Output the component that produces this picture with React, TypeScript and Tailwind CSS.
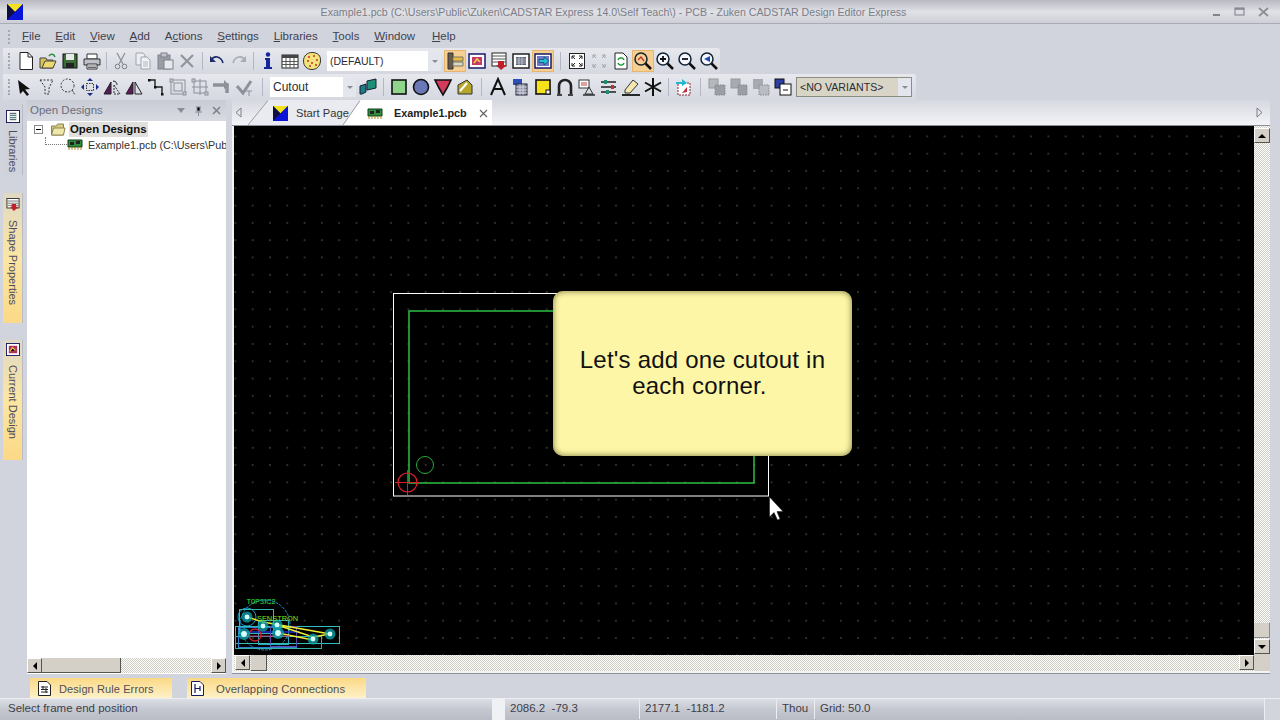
import React from "react";

type P = { children?: React.ReactNode };
const S = ({ children }: P) => (
  <span className="flex w-[22px] h-[22px] shrink-0 items-center justify-center">
    <svg width="20" height="20" viewBox="0 0 20 20" fill="none">{children}</svg>
  </span>
);
const Sel = ({ children }: P) => (
  <span className="flex w-[22px] h-[22px] shrink-0 items-center justify-center bg-[#f6cf93] border border-[#e6b56f]">
    <svg width="20" height="20" viewBox="0 0 20 20" fill="none">{children}</svg>
  </span>
);
const Sep = ({ w }: { w: number }) => (
  <span style={{ width: w }} className="flex shrink-0 justify-center">
    <span className="w-px h-[18px] bg-[#b4b7c2]" />
  </span>
);
const Grip = () => <span className="w-[2px] h-[16px] ml-[5px] shrink-0 border-l-2 border-dotted border-[#a4a7b2]" />;

const Logo = ({ s = 16 }: { s?: number }) => (
  <svg width={s} height={s} viewBox="0 0 16 16"><rect width="16" height="16" fill="#0a0a9c" /><path d="M0 0H16L8 8Z" fill="#f3e21c" /><path d="M0 0L8 8L0 16Z" fill="#101040" /><path d="M0 16L16 0V16Z" fill="#0a14d8" /></svg>
);
const Board = ({ w = 16 }: { w?: number }) => (
  <svg width={w} height={12} viewBox="0 0 16 12"><path d="M1 1H15V8H1Z" fill="#2f8f3c" stroke="#0d3d18" /><path d="M3 3H7V6H3ZM9 2H13V5H9Z" fill="#222" /><path d="M2 8V11M5 8V11M8 8V11M11 8V11M14 8V11" stroke="#b58a20" /></svg>
);
const Mag = ({ children, hot }: P & { hot?: boolean }) => (
  <>
    <circle cx="8" cy="8" r="6" fill={hot ? "#f6cf93" : "#f4f6ff"} stroke="#123" strokeWidth="1.5" />
    <path d="M12.5 12.5L18 18" stroke="#111" strokeWidth="2.5" />
    {children}
  </>
);
const Panel = ({ tone = "#181868", children }: P & { tone?: string }) => (
  <>
    <rect x="2" y="3" width="16" height="14" fill="#fff" stroke={tone} strokeWidth="1.5" />
    {children}
  </>
);

const ChevCombo = ({ label, w, bg = "bg-white", border = "", text = "text-[12px]", pad = "pt-px" }: { label: string; w: string; bg?: string; border?: string; text?: string; pad?: string }) => (
  <div className={`${w} ${bg} ${border} ${text} h-[20px] shrink-0 flex items-center justify-between text-[#2b2b33]`}>
    <span className={`pl-[3px] ${pad}`}>{label}</span>
    <span className="w-[13px] h-full flex items-center justify-center bg-[#e4e6ee]">
      <span className="border-x-[3px] border-t-[3px] border-x-transparent border-t-[#8a8c96]" />
    </span>
  </div>
);

const ScrollBtn = ({ d, cls = "" }: { d: "l" | "r" | "u" | "d"; cls?: string }) => (
  <span className={`w-[15px] h-[15px] shrink-0 flex items-center justify-center bg-[#d4d0c8] border-r border-b border-[#55554f] border-t border-l border-t-white border-l-white ${cls}`}>
    {d === "l" && <span className="border-y-[4px] border-r-[4px] border-y-transparent border-r-black" />}
    {d === "r" && <span className="border-y-[4px] border-l-[4px] border-y-transparent border-l-black" />}
    {d === "u" && <span className="border-x-[4px] border-b-[4px] border-x-transparent border-b-black" />}
    {d === "d" && <span className="border-x-[4px] border-t-[4px] border-x-transparent border-t-black" />}
  </span>
);

const Dither = "bg-[repeating-conic-gradient(#cfccc2_0_25%,#ffffff_0_50%)] bg-[size:2px_2px]";

const SideTab = ({ label, icon, yellow, h, pt, gap }: { label: string; icon: React.ReactNode; yellow?: boolean; h: string; pt: string; gap: string }) => (
  <div className={`${h} ${pt} ${gap} w-[20px] flex flex-col items-center pl-px ${yellow ? "bg-gradient-to-b from-[#dfd9c4] via-[#fbe6a3] to-[#fbd987]" : "bg-[#d0d2dc]"} border-r border-[#b9bbc6]`}>
    <span className="shrink-0 flex">{icon}</span>
    <span className="[writing-mode:vertical-rl] text-[11px] text-[#4c4c5c] leading-[16px] whitespace-nowrap">{label}</span>
  </div>
);

const Menu = ({ a, u, z, cls = "" }: { a?: string; u: string; z: string; cls?: string }) => (
  <span className={`text-[11.5px] text-[#3f414d] whitespace-nowrap ${cls}`}>
    {a}<span className="underline">{u}</span>{z}
  </span>
);

const Pad = ({ x, y, r = 3 }: { x: number; y: number; r?: number }) => (
  <>
    <circle cx={x} cy={y} r={r + 2.5} fill="#0fa8b0" opacity=".75" />
    <circle cx={x} cy={y} r={r - 0.6} fill="#d8ffff" />
  </>
);

export default function App() {
  return (
    <div className="w-[1280px] h-[720px] flex flex-col overflow-hidden bg-[#d1d4dd] font-['Liberation_Sans','Noto_Sans',sans-serif] select-none">
      {/* Title bar */}
      <div className="h-[24px] shrink-0 relative flex items-center bg-gradient-to-b from-[#b9bac2] via-[#e0e1e6] to-[#cfd0d7] border-b border-[#a9abb5] pl-[7px]">
        <Logo />
        <div className="flex-1 text-center pt-[2px] text-[10.6px] text-[#7b7d88] whitespace-nowrap">
          Example1.pcb (C:\Users\Public\Zuken\CADSTAR Express 14.0\Self Teach\) - PCB - Zuken CADSTAR Design Editor Express
        </div>
        <div className="flex items-center gap-[13px] pr-[11px] pl-[8px]">
          <svg width="9" height="9" viewBox="0 0 9 9"><path d="M1 8H8" stroke="#6b6d78" strokeWidth="1.6" /></svg>
          <svg width="11" height="9" viewBox="0 0 11 9"><rect x="1" y="1" width="9" height="7" fill="none" stroke="#7b7d88" /><path d="M1 2H10" stroke="#7b7d88" strokeWidth="1.4" /></svg>
          <svg width="11" height="10" viewBox="0 0 11 10"><path d="M1 1L10 9M10 1L1 9" stroke="#8b8d97" strokeWidth="1.7" /></svg>
        </div>
      </div>

      {/* Menu */}
      <div className="h-[24px] shrink-0 flex items-center pl-[8px] pt-[2px]">
        <span className="w-[2px] h-[14px] border-l-2 border-dotted border-[#a4a7b2] mr-[12px]" />
        <div className="flex items-center gap-[14.8px]">
          <Menu u="F" z="ile" />
          <Menu u="E" z="dit" />
          <Menu u="V" z="iew" />
          <Menu u="A" z="dd" />
          <Menu a="A" u="c" z="tions" />
          <Menu u="S" z="ettings" />
          <Menu u="L" z="ibraries" />
          <Menu u="T" z="ools" />
          <Menu u="W" z="indow" />
          <Menu u="H" z="elp" cls="ml-[2px]" />
        </div>
      </div>

      {/* Toolbar 1 */}
      <div className="h-[26px] w-[717px] shrink-0 flex items-center ml-[3px] bg-gradient-to-b from-[#e6e8ee] to-[#d5d8e0] rounded-r-[3px]">
        <Grip />
        <span className="w-[5px]" />
        <S><path d="M4 1.5H12L16.5 6V18.5H4Z" fill="#fff" stroke="#222" /><path d="M12 1.5V6H16.5" stroke="#222" /></S>
        <S><path d="M2 7H8L9 9H15V17H2Z" fill="#d8c25a" stroke="#444" /><path d="M4 17L7 10H18L15 17Z" fill="#ecd972" stroke="#444" /><path d="M11 5C13 2 16 3 17 6" stroke="#2f8f3c" strokeWidth="1.5" /></S>
        <S><rect x="3" y="3" width="14" height="14" fill="#3d6b35" stroke="#111" /><rect x="6" y="3" width="8" height="6" fill="#e8e8e8" /><rect x="6" y="12" width="8" height="5" fill="#222" /></S>
        <S><path d="M5 3H15V8H5Z" fill="#fff" stroke="#333" /><path d="M2 8H18V14H2Z" fill="#bfc2c8" stroke="#333" /><path d="M5 13H15V18H5Z" fill="#fff" stroke="#333" /><path d="M6 15H14M6 16.5H14" stroke="#666" /></S>
        <Sep w={7} />
        <S><path d="M6 2L12 13M14 2L8 13" stroke="#8e909a" strokeWidth="1.3" /><circle cx="6.5" cy="15.5" r="2.3" stroke="#7e808a" /><circle cx="13.5" cy="15.5" r="2.3" stroke="#7e808a" /></S>
        <S><path d="M3 2H10L12 4V14H3Z" fill="#eceef2" stroke="#a1a3ad" /><path d="M8 6H14L17 9V18H8Z" fill="#f2f3f6" stroke="#a1a3ad" /><path d="M10 11H15M10 13H15M10 15H15" stroke="#b4b6be" /></S>
        <S><rect x="3" y="4" width="12" height="14" fill="#9a9ca6" stroke="#7f818b" /><rect x="6" y="2" width="6" height="4" fill="#c1c3cb" stroke="#7f818b" /><rect x="9" y="9" width="9" height="9" fill="#e8e9ed" stroke="#7f818b" /></S>
        <S><path d="M4 4L16 16M16 4L4 16" stroke="#92949e" strokeWidth="2.2" /></S>
        <Sep w={8} />
        <S><path d="M4 9C7 4 14 5 16 12" stroke="#1d2b66" strokeWidth="1.6" /><path d="M3 5V11H9Z" fill="#1d2b66" /></S>
        <S><path d="M16 9C13 4 6 5 4 12" stroke="#a9abb5" strokeWidth="1.6" /><path d="M17 5V11H11Z" fill="#a9abb5" /></S>
        <Sep w={7} />
        <S><circle cx="10" cy="3.5" r="2.2" fill="#14249a" /><path d="M7 7H12V16H14V18H6V16H8V9H7Z" fill="#14249a" /></S>
        <S><rect x="2" y="4" width="16" height="13" fill="#fff" stroke="#222" /><rect x="2" y="4" width="16" height="3" fill="#444" /><path d="M2 10.5H18M2 13.5H18M6 7V17M10 7V17M14 7V17" stroke="#555" /></S>
        <S><path d="M10 1.5C16 1.5 19 5 18.5 10C18 16 14 18.5 10 18.5C5 18.5 1.5 15 1.5 10C1.5 5 5 1.5 10 1.5Z" fill="#f4e37a" stroke="#333" /><path d="M6 6H8M11 5H13M14 9H16M5 10H7M9 12H11M13 14H15M7 15H9" stroke="#c0303a" strokeWidth="1.4" /></S>
        <span className="w-[4px]" />
        <ChevCombo label="(DEFAULT)" w="w-[114px]" text="text-[10.5px]" />
        <span className="w-[3px]" />
        <Sel><path d="M3 2H8V18H3Z" fill="#6a5a4a" stroke="#333" /><path d="M8 6H18V10H8Z" fill="#e8c040" stroke="#776" /><path d="M8 11H18V15H8Z" fill="#d8d8c0" stroke="#776" /></Sel>
        <S><Panel><path d="M5 6H15V14H5Z" fill="#c63a6a" /><path d="M7 12L10 8L13 11" stroke="#f4d34a" strokeWidth="1.5" /></Panel></S>
        <S><rect x="3" y="2" width="14" height="13" fill="#fff" stroke="#222" /><path d="M3 5H17M3 8H17M3 11H17" stroke="#555" /><path d="M9 10H15V14H18L12 19L7 14H9Z" fill="#c0202a" /></S>
        <S><Panel tone="#222"><rect x="5" y="6" width="10" height="8" fill="#5a6078" /><path d="M5 8H15M5 10H15M5 12H15M8 6V14M11 6V14" stroke="#eee" strokeWidth=".6" /></Panel></S>
        <Sel><Panel><rect x="4" y="5" width="12" height="10" fill="#6a78c8" /><path d="M6 8.5H11V6L16 10L11 14V11.5H6Z" fill="#22c0d8" stroke="#134" strokeWidth=".6" /></Panel></Sel>
        <Sep w={12} />
        <S><rect x="2.5" y="2.5" width="15" height="15" fill="#fff" stroke="#222" /><path d="M5 5H8M5 5V8M5 5L8 8M15 5H12M15 5V8M15 5L12 8M5 15H8M5 15V12M5 15L8 12M15 15H12M15 15V12M15 15L12 12" stroke="#222" /></S>
        <S><path d="M4 4H7M4 4V7M4 4L7 7M16 4H13M16 4V7M16 4L13 7M4 16H7M4 16V13M4 16L7 13M16 16H13M16 16V13M16 16L13 13" stroke="#9fa1ab" /></S>
        <S><path d="M4 2H12L16 6V18H4Z" fill="#fff" stroke="#222" /><path d="M7 9C8 6 12 6 13 9M13 12C12 15 8 15 7 12" stroke="#1f9a3a" strokeWidth="1.5" /></S>
        <Sel><Mag hot><path d="M5 9L8 6L11 10" stroke="#c03030" strokeWidth="1.3" /></Mag></Sel>
        <S><Mag><path d="M5 8H11M8 5V11" stroke="#111" strokeWidth="1.8" /></Mag></S>
        <S><Mag><path d="M5 8H11" stroke="#111" strokeWidth="1.8" /></Mag></S>
        <S><Mag><path d="M11 5L5 8L11 11Z" fill="#1c4ea8" /></Mag></S>
      </div>

      {/* Toolbar 2 */}
      <div className="h-[26px] w-[913px] shrink-0 flex items-center ml-[3px] bg-gradient-to-b from-[#e6e8ee] to-[#d5d8e0] rounded-r-[3px]">
        <Grip />
        <span className="w-[3px]" />
        <S><path d="M4 3L16 12L11 12.5L15 17.5L13 19L9 14L6 17Z" fill="#111" /></S>
        <S><path d="M4 3H17L13 11V17H9V10Z" stroke="#333" strokeDasharray="2 1.5" /></S>
        <S><circle cx="9.5" cy="8.5" r="6.5" stroke="#333" strokeDasharray="2 1.5" /><path d="M14 13L17 18" stroke="#333" strokeDasharray="2 1" /></S>
        <S><path d="M10 1L13 4H7ZM10 19L13 16H7ZM1 10L4 7V13ZM19 10L16 7V13Z" fill="#1b2b88" /><rect x="6.5" y="6.5" width="7" height="7" stroke="#333" strokeDasharray="1.5 1" /></S>
        <S><path d="M2 17L9 5V17Z" fill="#5a1a58" stroke="#222" /><path d="M12 8V17H18Z" stroke="#333" strokeDasharray="2 1" /><path d="M11 4C14 4 15 6 15 8" stroke="#222" /></S>
        <S><path d="M2 17L9 5V17Z" fill="#5a1a58" stroke="#222" /><path d="M11 5V17H18Z" stroke="#222" /></S>
        <S><path d="M3 3L9 3V10H16V17" stroke="#222" strokeWidth="1.4" /><rect x="2" y="2" width="2.5" height="2.5" fill="#111" /><rect x="8" y="9" width="2.5" height="2.5" fill="#111" /><rect x="15" y="16" width="2.5" height="2.5" fill="#111" /></S>
        <S><rect x="3" y="3" width="14" height="14" stroke="#8e909a" /><rect x="6" y="6" width="8" height="8" stroke="#8e909a" /><rect x="2" y="2" width="3" height="3" fill="#c9cbd3" stroke="#8e909a" /><rect x="15" y="15" width="3" height="3" fill="#c9cbd3" stroke="#8e909a" /></S>
        <S><rect x="4" y="4" width="12" height="12" stroke="#8e909a" /><path d="M10 2V18M2 10H18" stroke="#8e909a" /><rect x="2" y="2" width="3" height="3" fill="#c9cbd3" stroke="#8e909a" /><rect x="15" y="15" width="3" height="3" fill="#c9cbd3" stroke="#8e909a" /></S>
        <S><path d="M1 8H15V16" stroke="#8e909a" strokeWidth="3.5" /><path d="M12 3L17 8L12 12" fill="#8e909a" /></S>
        <S><path d="M3 9L9 16L17 4" stroke="#8e909a" strokeWidth="3" /><path d="M12 14H18M15 14V19" stroke="#8e909a" /></S>
        <Sep w={15} />
        <ChevCombo label="Cutout" w="w-[86px]" pad="pt-0" />
        <span className="w-px" />
        <S><path d="M2 9L8 7V15L4 17H2Z" fill="#1d7a86" stroke="#123" /><path d="M9 4L18 2V11L9 13Z" fill="#1d8f78" stroke="#123" /></S>
        <Sep w={9} />
        <S><rect x="3" y="3" width="14" height="14" fill="#8fd48a" stroke="#111" strokeWidth="1.6" /></S>
        <S><circle cx="10" cy="10" r="7.5" fill="#6a78b8" stroke="#111" strokeWidth="1.6" /></S>
        <S><path d="M2 3H18L14 11L10 18L6 11Z" fill="#d43a5a" stroke="#111" strokeWidth="1.6" /></S>
        <S><path d="M3 17V8L12 3L17 8V17Z" fill="#b7a62c" stroke="#333" /><path d="M5 14L12 6" stroke="#fff" strokeWidth="2" /></S>
        <Sep w={11} />
        <S><path d="M3 18L10 2L17 18M6 12H14" stroke="#111" strokeWidth="2" /></S>
        <S><rect x="3" y="2" width="9" height="6" fill="#2a4fb8" /><rect x="6" y="7" width="11" height="11" fill="#8a90a8" stroke="#223" /><path d="M6 10H17M6 13H17M6 16H17M10 7V18M13 7V18" stroke="#eee" strokeWidth=".7" /></S>
        <span className="w-px" />
        <S><rect x="3" y="3" width="14" height="14" fill="#f6e21c" stroke="#111" strokeWidth="1.6" /><rect x="13" y="13" width="4" height="4" fill="#fff" stroke="#111" /></S>
        <S><path d="M4 18V9C4 1 16 1 16 9V18" stroke="#222" strokeWidth="2.6" /><path d="M2 18H7M13 18H18" stroke="#444" strokeWidth="2" /></S>
        <S><rect x="2" y="3" width="10" height="8" fill="#fff" stroke="#333" /><path d="M4 6H10M4 8H10" stroke="#c04040" /><path d="M12 10L16 17H8Z" stroke="#333" /><path d="M6 18H18" stroke="#222" strokeWidth="1.4" /></S>
        <S><path d="M2 5H17M2 10H17M2 15H17" stroke="#222" strokeWidth="1.6" /><rect x="5" y="3" width="3" height="4" fill="#1f8f70" /><rect x="12" y="8" width="3" height="4" fill="#c03030" /><rect x="7" y="13" width="3" height="4" fill="#1f8f70" /></S>
        <S><path d="M4 13L12 3L17 7L9 16H4Z" fill="#f4e8b0" stroke="#333" /><path d="M1 18H19" stroke="#111" strokeWidth="1.8" /></S>
        <S><path d="M10 1V19M2 5.5L18 14.5M18 5.5L2 14.5" stroke="#111" strokeWidth="2" /></S>
        <Sep w={8} />
        <S><rect x="5" y="6" width="12" height="12" fill="#fff" stroke="#8a2030" strokeDasharray="2 1" /><path d="M3 5H9V2L14 6L9 9V7H3Z" fill="#22b8d0" /><path d="M9 16L14 10V15Z" fill="#c03040" /></S>
        <Sep w={12} />
        <S><rect x="2" y="2" width="9" height="9" fill="#b6b8c0" stroke="#999" /><rect x="8" y="8" width="10" height="10" fill="#9c9ea6" stroke="#888" strokeDasharray="1.5 1" /></S>
        <S><rect x="2" y="2" width="9" height="9" fill="#a8aab2" stroke="#999" /><rect x="9" y="8" width="9" height="10" fill="#9c9ea6" stroke="#888" strokeDasharray="1.5 1" /></S>
        <S><path d="M2 2H12V12H2Z" fill="#a8aab2" /><path d="M8 8H18V18H8Z" fill="#babcc4" stroke="#888" strokeDasharray="1.5 1" /></S>
        <S><rect x="2" y="2" width="9" height="9" fill="#2a3fa0" stroke="#111" /><rect x="7" y="7" width="11" height="11" fill="#fff" stroke="#111" /><path d="M10 13H15" stroke="#111" /></S>
        <span className="w-[2px]" />
        <ChevCombo label="<NO VARIANTS>" w="w-[116px]" bg="bg-[#d8d5c6]" border="border border-[#8c8c80]" text="text-[10.6px]" />
      </div>

      {/* Body */}
      <div className="flex-1 min-h-0 flex">
        {/* Side tabs */}
        <div className="w-[27px] shrink-0 flex flex-col pl-[3px] pt-[4px]">
          <SideTab h="h-[71px]" pt="pt-[6px]" gap="gap-[7px]" label="Libraries" icon={<svg width="14" height="13" viewBox="0 0 15 14"><rect x=".5" y=".5" width="14" height="13" fill="#fff" stroke="#141450" /><rect x="4" y="3" width="7" height="8" fill="#5d6b78" /><path d="M4 5H11M4 7H11M4 9H11" stroke="#dfe" /></svg>} />
          <div className="mt-[18px]">
            <SideTab h="h-[130px]" pt="pt-[5px]" gap="gap-[9px]" yellow label="Shape Properties" icon={<svg width="14" height="13" viewBox="0 0 15 15"><rect x=".5" y=".5" width="14" height="11" fill="#fff" stroke="#222" /><path d="M1 3.5H14M1 6H14M1 8.5H14" stroke="#666" /><path d="M6 7H11V10H14L8.5 15L4 10H6Z" fill="#c0202a" /></svg>} />
          </div>
          <div className="mt-[17px]">
            <SideTab h="h-[120px]" pt="pt-[3px]" gap="gap-[9px]" yellow label="Current Design" icon={<svg width="14" height="13" viewBox="0 0 15 14"><rect x=".5" y=".5" width="14" height="13" fill="#fff" stroke="#181868" /><rect x="3" y="3" width="9" height="8" fill="#b03060" /><path d="M4 9L7 5L10 8" stroke="#f4d34a" strokeWidth="1.3" /></svg>} />
          </div>
        </div>

        {/* Left panel + bottom tabs column */}
        <div className="flex-1 min-w-0 flex flex-col">
          <div className="flex-1 min-h-0 flex">
            {/* Open Designs */}
            <div className="w-[199px] shrink-0 flex flex-col">
              <div className="h-[21px] shrink-0 flex items-center justify-between bg-gradient-to-b from-[#c8cbd4] to-[#d9dbe3] pl-[3px] pr-[5px]">
                <span className="text-[11.5px] text-[#6b6e7c]">Open Designs</span>
                <div className="flex items-center gap-[9px]">
                  <span className="border-x-[4px] border-t-[5px] border-x-transparent border-t-[#8a8d99]" />
                  <svg width="9" height="10" viewBox="0 0 9 10"><path d="M2 1H7M3 1V5H6V1M1 6H8M4.5 6V10" stroke="#8a8d99" /></svg>
                  <svg width="9" height="9" viewBox="0 0 9 9"><path d="M1 1L8 8M8 1L1 8" stroke="#7e818d" strokeWidth="1.5" /></svg>
                </div>
              </div>
              <div className="flex-1 min-h-0 flex flex-col bg-white">
                <div className="flex-1 min-h-0 pl-[7px] pt-[1px] overflow-hidden">
                  <div className="flex items-center h-[15px]">
                    <span className="w-[9px] h-[9px] border border-[#8a8a8a] flex items-center justify-center shrink-0"><span className="w-[5px] h-px bg-black" /></span>
                    <svg className="ml-[7px] shrink-0" width="16" height="13" viewBox="0 0 15 13"><path d="M1 3H6L7 1H13V12H1Z" fill="#d8cc82" stroke="#8a8450" /><path d="M1 12L3 5H14.5L13 12Z" fill="#f0e8aa" stroke="#8a8450" /></svg>
                    <span className="ml-[3px] pl-px pr-px bg-[#e0dfdc] text-[11.4px] font-bold text-[#111] leading-[15px] whitespace-nowrap">Open Designs</span>
                  </div>
                  <div className="flex items-center h-[16px] whitespace-nowrap">
                    <span className="ml-[11px] w-[22px] h-[8px] -mt-[8px] border-l border-b border-dotted border-[#777] shrink-0" />
                    <span className="shrink-0 flex"><Board /></span>
                    <span className="ml-[5px] text-[10.8px] text-[#333]">Example1.pcb (C:\Users\Pub</span>
                  </div>
                </div>
                <div className={`h-[15px] mb-px shrink-0 flex ${Dither}`}>
                  <ScrollBtn d="l" />
                  <span className="w-[79px] bg-[#d4d0c8] border-r border-b border-[#55554f]" />
                  <span className="flex-1" />
                  <ScrollBtn d="r" />
                </div>
              </div>
            </div>

            {/* Main document */}
            <div className="flex-1 min-w-0 flex flex-col ml-[6px] mr-[10px] border-b border-[#8f919b]">
              <div className="h-[26px] shrink-0 relative flex items-end bg-gradient-to-b from-[#d6d8e0] to-[#f3f4f7] border-b border-[#8c8e98]">
                <svg className="absolute left-[3px] top-[7px]" width="7" height="11" viewBox="0 0 7 11"><path d="M6 1L1 5.5L6 10Z" fill="none" stroke="#7c7e8a" /></svg>
                <div className="ml-[16px] h-[25px] w-[114px] shrink-0 flex items-center pl-[25px] pt-[2px] [clip-path:polygon(20px_0,100%_0,95px_100%,0_100%)] bg-[#e9ebf0] gap-[8px]">
                  <Logo s={15} />
                  <span className="text-[11.2px] text-[#333] whitespace-nowrap">Start Page</span>
                </div>
                <div className="-ml-[19px] h-[25px] w-[149px] shrink-0 flex items-center pl-[24px] pt-[2px] [clip-path:polygon(18px_0,100%_0,100%_100%,0_100%)] bg-white">
                  <Board />
                  <span className="ml-[11px] text-[10.8px] font-bold text-[#222] whitespace-nowrap">Example1.pcb</span>
                  <svg className="ml-[12px]" width="9" height="9" viewBox="0 0 9 9"><path d="M1 1L8 8M8 1L1 8" stroke="#666" strokeWidth="1.2" /></svg>
                </div>
                <svg className="absolute left-[16px] top-0" width="112" height="25" viewBox="0 0 112 25" fill="none">
                  <path d="M0 25L20 0.5M95 25L112 0.5" stroke="#9a9ca8" />
                </svg>
                <svg className="absolute right-[7px] top-[7px]" width="7" height="11" viewBox="0 0 7 11"><path d="M1 1L6 5.5L1 10Z" fill="none" stroke="#7c7e8a" /></svg>
              </div>
              <div className="flex-1 min-h-0 flex pl-[2px] pb-[2px] bg-[#f4f4f4]">
                <div className="flex-1 min-w-0 flex flex-col">
                  {/* Canvas */}
                  <div className="flex-1 min-h-0 relative overflow-hidden bg-black bg-[radial-gradient(circle,#3a3a3a_0.6px,transparent_1px)] bg-[size:17.3px_17.3px] bg-[position:-7.25px_1.75px]">
                    <svg className="absolute left-0 top-0" width="1020" height="529" viewBox="0 0 1020 529" fill="none">
                      <rect x="159.5" y="167.5" width="375" height="202.5" stroke="#fff" />
                      <rect x="175" y="185" width="345" height="172" stroke="#2cc044" strokeWidth="1.5" />
                      <circle cx="191" cy="339" r="8.5" stroke="#2aa83c" />
                      <g stroke="#d8202c">
                        <circle cx="173.5" cy="356.5" r="9.5" strokeWidth="1.2" />
                        <path d="M161 356.5H186M173.5 344V369" />
                      </g>
                      <path d="M535.5 371V391L540 386.5L543.5 394L546 393L543 385.5H549Z" fill="#fff" stroke="#111" strokeWidth=".5" />
                      {/* mini-design */}
                      <g transform="translate(-234,-126)">
                        <circle cx="265" cy="625" r="25" stroke="#1a8fd0" strokeDasharray="3 1" />
                        <circle cx="247" cy="617" r="9" stroke="#1aa0c0" />
                        <rect x="239.5" y="609.5" width="34" height="24" stroke="#30b8b0" />
                        <rect x="235.5" y="626.5" width="104" height="17" stroke="#30c0b8" />
                        <rect x="235.5" y="636.5" width="86" height="12" stroke="#30b0a8" />
                        <rect x="238.5" y="627.5" width="58" height="20" stroke="#2f7fd0" />
                        <rect x="270.5" y="626.5" width="26" height="20" stroke="#5a4ab0" />
                        <rect x="258.5" y="620.5" width="30" height="24" stroke="#30a8c0" />
                        <path d="M244 632H300" stroke="#2030d0" strokeWidth="1.4" />
                        <path d="M247 617L263 622L330 634M277 625L313 637L330 634M278 633L313 640" stroke="#f0f030" strokeWidth="1.4" />
                        <path d="M246 636H290" stroke="#c82a6a" />
                        <circle cx="255" cy="635" r="6" stroke="#c82030" strokeWidth="1.3" />
                        <Pad x={247} y={617} />
                        <Pad x={244} y={634} r={3.5} />
                        <Pad x={263} y={626} />
                        <Pad x={277} y={625} />
                        <Pad x={278} y={633} r={3.5} />
                        <Pad x={313} y={639} />
                        <Pad x={330} y={634} />
                        <text x="246.5" y="604" fontSize="7.4" fill="#2fe03a" fontFamily="Liberation Sans">T0P3IC2</text>
                        <text x="257" y="620.5" fontSize="7.4" fill="#7be020" fontFamily="Liberation Sans">SENSTRON</text>
                      </g>
                    </svg>
                    {/* Callout */}
                    <div className="absolute left-[319px] top-[165px] w-[299px] h-[165px] rounded-[10px] bg-[#fcf6a6] shadow-[inset_0_0_6px_0_#77723c] flex flex-col items-center justify-center pb-[2px] text-[24px] leading-[26px] text-[#111]">
                      <span className="tracking-[0.2px]">Let's add one cutout in</span>
                      <span className="pr-[6px] tracking-[0.2px]">each corner.</span>
                    </div>
                  </div>
                  {/* H scroll */}
                  <div className={`h-[16px] shrink-0 flex ${Dither}`}>
                    <ScrollBtn d="l" cls="ml-px" />
                    <span className="w-[16px] bg-[#d4d0c8] border-r border-b border-[#55554f] ml-px" />
                    <span className="flex-1" />
                    <ScrollBtn d="r" />
                  </div>
                </div>
                {/* V scroll */}
                <div className="w-[16px] shrink-0 flex flex-col">
                  <div className={`flex-1 min-h-0 flex flex-col ${Dither}`}>
                    <ScrollBtn d="u" cls="mt-[2px] w-[16px]" />
                    <span className="flex-1" />
                    <span className="h-[15px] mb-px bg-[#d4d0c8] border-r border-b border-[#8c8c84]" />
                    <ScrollBtn d="d" cls="w-[16px]" />
                  </div>
                  <div className="h-[17px] shrink-0 bg-[#d4d0c8]" />
                </div>
              </div>
            </div>
          </div>

          {/* Bottom tabs */}
          <div className="h-[24px] shrink-0 flex items-end pl-[3px] gap-[15px]">
            <div className="w-[142px] h-[20px] flex items-center pl-[8px] bg-gradient-to-b from-[#fbd985] to-[#fdf1c6]">
              <svg width="13" height="15" viewBox="0 0 13 15"><path d="M.5.5H9L12.5 4V14.5H.5Z" fill="#fff" stroke="#222" /><path d="M3 6H10M3 8.5H10M3 11H10M5 5V9M8 7V12" stroke="#222" /></svg>
              <span className="ml-[8px] pt-[2px] text-[11px] text-[#4f4f55] whitespace-nowrap tracking-[0.1px]">Design Rule Errors</span>
            </div>
            <div className="w-[179px] h-[20px] flex items-center pl-[4px] bg-gradient-to-b from-[#fbd985] to-[#fdf1c6]">
              <svg width="13" height="15" viewBox="0 0 13 15"><path d="M.5.5H9L12.5 4V14.5H.5Z" fill="#fff" stroke="#181868" /><path d="M4 3V12M4 7.5H9M9 5V10" stroke="#181868" strokeWidth="1.2" /></svg>
              <span className="ml-[12px] pt-[2px] text-[11.3px] text-[#4f4f55] whitespace-nowrap tracking-[0.1px]">Overlapping Connections</span>
            </div>
          </div>
        </div>
      </div>

      {/* Status */}
      <div className="h-[22px] shrink-0 flex items-center bg-gradient-to-b from-[#dcdee5] via-[#c6c8d1] to-[#b9bbc5] border-t border-[#eceef2] text-[11.5px] text-[#3d3f4a] whitespace-nowrap">
        <span className="w-[492px] pl-[8px] pb-[2px] shrink-0">Select frame end position</span>
        <span className="w-[13px] h-full shrink-0 bg-[#f0f1f4]" />
        <span className="w-[135px] pl-[5px] pb-[2px] shrink-0 border-r border-[#eceef2]">2086.2&nbsp;&nbsp;-79.3</span>
        <span className="w-[137px] pl-[5px] pb-[2px] shrink-0 border-r border-[#eceef2]">2177.1&nbsp;&nbsp;-1181.2</span>
        <span className="w-[38px] pl-[5px] pb-[2px] shrink-0 border-r border-[#eceef2]">Thou</span>
        <span className="w-[100px] pl-[5px] pb-[2px] shrink-0">Grid: 50.0</span>
        <span className="flex-1" />
        <span className="w-[16px] h-full shrink-0 border-l border-[#eceef2] bg-[#d3d5dc]" />
      </div>
    </div>
  );
}
